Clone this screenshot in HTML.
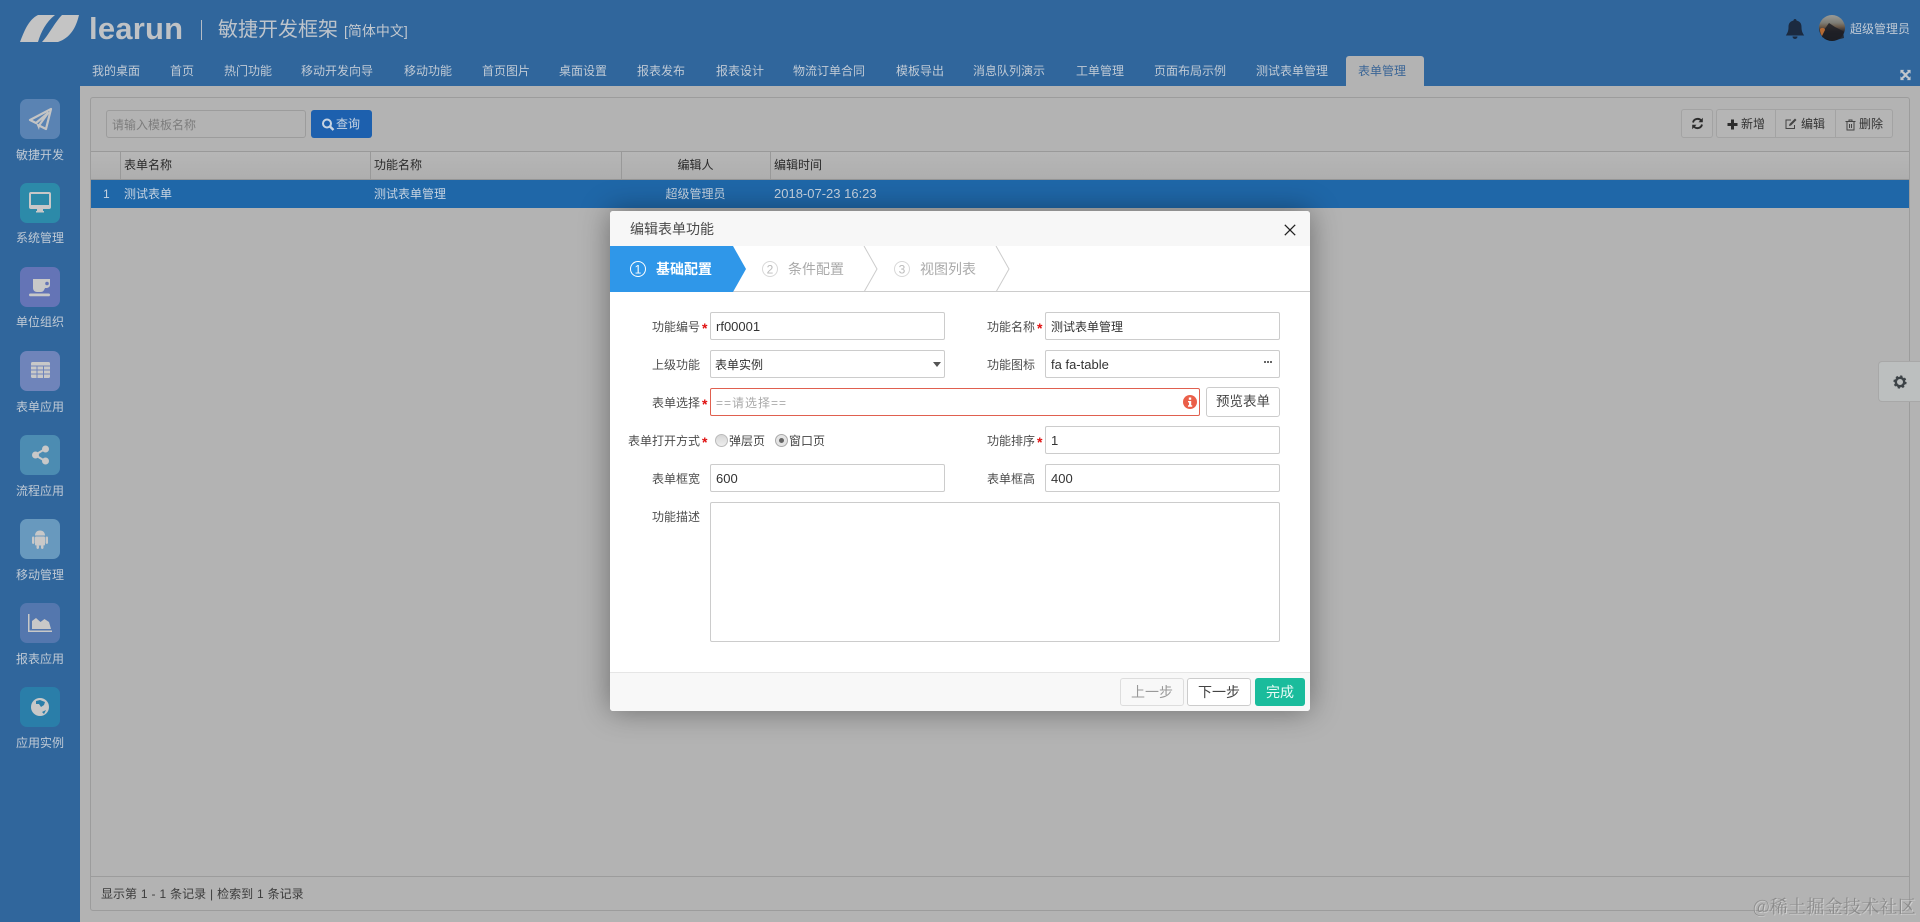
<!DOCTYPE html>
<html lang="zh"><head><meta charset="utf-8"><title>learun</title>
<style>
*{box-sizing:border-box}
html,body{margin:0;padding:0;width:1920px;height:922px;overflow:hidden;background:#b3b3b3}
body{position:relative;font:12px/20px "Liberation Sans","Noto Sans CJK SC",sans-serif;color:#333;filter:blur(.3px)}
div,span,svg{position:absolute}
.t{white-space:nowrap;height:20px;line-height:20px}
.c{text-align:center}
.tab{color:#c0cad5;top:61px}
.mi{left:20px;width:40px;height:40px;border-radius:7px}
.mi svg{left:0;top:0}
.ml{left:0;width:80px;text-align:center;color:#c0cad5;white-space:nowrap;height:20px;line-height:20px}
.th{top:155px;color:#2a2a2a}
.td{top:184px;color:#c6d3e0}
.inp{background:#fff;border:1px solid #ccc;border-radius:2px;height:28px}
.lb{color:#4d4d4d;text-align:right;white-space:nowrap;height:20px;line-height:20px}
.st{color:#e01010;font-size:14px;font-weight:bold}
.v{color:#333}
.l{font-size:13px}
.btn{border:1px solid #a3a3a3;background:#b5b5b5;height:29px}
</style></head><body>

<!-- top header -->
<div style="left:0;top:0;width:1920px;height:86px;background:#30669c"></div>
<div style="left:0;top:86px;width:80px;height:836px;background:#30669c"></div>

<svg style="left:0;top:0" width="90" height="60" viewBox="0 0 90 60">
<path fill="#c4c4c4" d="M20 42C24 32 28 20 38 15L55 15C46 22 41 32 38 42Z"/>
<path fill="#c4c4c4" d="M62 15L79 15C76 28 70 38 58 42L42 42C48 36 55 22 62 15Z"/>
</svg>
<div class="t" style="left:89px;top:9px;height:40px;font:bold 31px/40px 'Liberation Sans',sans-serif;color:#bfc2c5;letter-spacing:.2px">learun</div>
<div style="left:201px;top:20px;width:1px;height:20px;background:#b4bcc6"></div>
<div class="t" style="left:218px;top:20px;font-size:20px;color:#bec4cb;line-height:20px;height:24px">敏捷开发框架</div>
<div class="t" style="left:344px;top:21px;font-size:14px;color:#c2c8cf">[简体中文]</div>

<!-- tabs -->
<div class="t tab" style="left:92px">我的桌面</div>
<div class="t tab" style="left:170px">首页</div>
<div class="t tab" style="left:224px">热门功能</div>
<div class="t tab" style="left:301px">移动开发向导</div>
<div class="t tab" style="left:404px">移动功能</div>
<div class="t tab" style="left:482px">首页图片</div>
<div class="t tab" style="left:559px">桌面设置</div>
<div class="t tab" style="left:637px">报表发布</div>
<div class="t tab" style="left:716px">报表设计</div>
<div class="t tab" style="left:793px">物流订单合同</div>
<div class="t tab" style="left:896px">模板导出</div>
<div class="t tab" style="left:973px">消息队列演示</div>
<div class="t tab" style="left:1076px">工单管理</div>
<div class="t tab" style="left:1154px">页面布局示例</div>
<div class="t tab" style="left:1256px">测试表单管理</div>
<div style="left:1346px;top:56px;width:78px;height:30px;background:#b3b3b3;border-radius:3px 3px 0 0"></div>
<div class="t" style="left:1358px;top:61px;color:#3a6596">表单管理</div>

<!-- top right -->
<svg style="left:1785px;top:18px" width="20" height="22" viewBox="0 0 20 22">
<path fill="#1b2a40" d="M10 1C9 1 8.500 1.700 8.500 2.500C4.500 3.500 3.500 6 3.500 9C3.500 13 2.500 15 .8 17.500L19.200 17.500C17.500 15 16.500 13 16.500 9C16.500 6 15.500 3.500 11.500 2.500C11.500 1.700 11 1 10 1Z"/>
<path fill="#1b2a40" d="M7.500 18.500A2.500 2.500 0 0 0 12.500 18.500Z"/>
</svg>
<svg style="left:1819px;top:15px" width="26" height="26" viewBox="0 0 26 26">
<defs><linearGradient id="av" x1="0" y1="0" x2="0" y2="1"><stop offset="0" stop-color="#9b9b96"/><stop offset=".3" stop-color="#7d7d76"/><stop offset=".45" stop-color="#6a5a4a"/><stop offset=".65" stop-color="#22222a"/><stop offset="1" stop-color="#121419"/></linearGradient></defs>
<circle cx="13" cy="13" r="13" fill="url(#av)"/>
<path fill="#1f2026" d="M5 15L10 8L16 12L24 16L25 23L13 26L3 22Z" opacity=".85"/>
<path fill="#b46a33" d="M1 14C3 12 6 13 6 15L3 21C1.500 19 1 17 1 14Z"/>
</svg>
<div class="t" style="left:1850px;top:19px;color:#c0cad5">超级管理员</div>
<svg style="left:1900px;top:69px" width="11" height="12" viewBox="0 0 13 13">
<path fill="#c0c6cc" d="M0.500 0.500H5L3.600 1.900L6.500 4.500L9.400 1.900L8 0.500H12.500V5L11.100 3.600L8.300 6.500L11.100 9.400L12.500 8V12.500H8L9.400 11.100L6.500 8.500L3.600 11.100L5 12.500H0.500V8L1.900 9.400L4.700 6.500L1.900 3.600L0.500 5Z"/>
</svg>

<!-- sidebar -->
<div class="mi" style="top:99px;background:#5a83b3"><svg width="40" height="40" viewBox="0 0 40 40"><path fill="none" stroke="#c4c4c4" stroke-width="2.200" stroke-linejoin="round" d="M31 10L10 21L16 24L28 14L19 26.500L26 30Z"/><path fill="#c4c4c4" d="M16 24L19 31L20 26Z"/></svg></div>
<div class="ml" style="top:145px">敏捷开发</div>
<div class="mi" style="top:183px;background:#2c8aa9"><svg width="40" height="40" viewBox="0 0 40 40"><rect x="9" y="9" width="22" height="17" rx="2" fill="#c8c8c8"/><rect x="11" y="11" width="18" height="11" fill="#2c8aa9"/><rect x="17" y="26" width="6" height="2" fill="#c8c8c8"/><rect x="16" y="28" width="8" height="1.500" fill="#c8c8c8"/></svg></div>
<div class="ml" style="top:228px">系统管理</div>
<div class="mi" style="top:267px;background:#6474b6"><svg width="40" height="40" viewBox="0 0 40 40"><path fill="#c8c8c8" d="M13 12H30V18C30 20 28 21 26 21H25C24 23.500 23 25 21 25H17C15 25 13 23.500 13 21Z"/><circle cx="27" cy="16.500" r="1.800" fill="#6474b6"/><rect x="9" y="26.500" width="21" height="2.800" rx="1.400" fill="#c8c8c8"/></svg></div>
<div class="ml" style="top:312px">单位组织</div>
<div class="mi" style="top:351px;background:#6f84ba"><svg width="40" height="40" viewBox="0 0 40 40"><rect x="11" y="11" width="19" height="16" rx="1.500" fill="#c8c8c8"/><path stroke="#6f84ba" stroke-width="1" d="M11 15H30M11 19H30M11 23H30M17 15V27M23.500 15V27"/></svg></div>
<div class="ml" style="top:397px">表单应用</div>
<div class="mi" style="top:435px;background:#4c8cb2"><svg width="40" height="40" viewBox="0 0 40 40"><path stroke="#c8c8c8" stroke-width="2" fill="none" d="M25 14L15 20L25 26"/><circle cx="25.500" cy="14" r="3.500" fill="#c8c8c8"/><circle cx="15.500" cy="20" r="3.500" fill="#c8c8c8"/><circle cx="25.500" cy="26" r="3.500" fill="#c8c8c8"/></svg></div>
<div class="ml" style="top:481px">流程应用</div>
<div class="mi" style="top:519px;background:#6899be"><svg width="40" height="40" viewBox="0 0 40 40"><path fill="#c8c8c8" d="M15 16.500C15 13.500 17 11.500 20 11.500C23 11.500 25 13.500 25 16.500Z"/><rect x="15" y="17.500" width="10" height="9" rx="1" fill="#c8c8c8"/><rect x="12" y="17.500" width="2.400" height="7.500" rx="1.200" fill="#c8c8c8"/><rect x="25.600" y="17.500" width="2.400" height="7.500" rx="1.200" fill="#c8c8c8"/><rect x="16.500" y="26" width="2.500" height="4" rx="1.200" fill="#c8c8c8"/><rect x="21" y="26" width="2.500" height="4" rx="1.200" fill="#c8c8c8"/></svg></div>
<div class="ml" style="top:565px">移动管理</div>
<div class="mi" style="top:603px;background:#5477ae"><svg width="40" height="40" viewBox="0 0 40 40"><path fill="#c8c8c8" d="M8 11H9.500V27.500H32V29H8Z"/><path fill="#c8c8c8" d="M12 26V18L16 15L20.500 19L24.500 16L29 19L31 26Z"/></svg></div>
<div class="ml" style="top:649px">报表应用</div>
<div class="mi" style="top:687px;background:#2a7ea9"><svg width="40" height="40" viewBox="0 0 40 40"><circle cx="20" cy="20" r="9" fill="#c8c8c8"/><path fill="#2a7ea9" d="M16 14L20 13L25 15L24 18L21 20L19 17L16 17ZM22 25L26 23L24 27Z"/></svg></div>
<div class="ml" style="top:733px">应用实例</div>

<!-- main panel -->
<div style="left:90px;top:97px;width:1820px;height:814px;border:1px solid #9c9c9c;border-radius:3px;background:#b3b3b3"></div>
<div class="inp" style="left:106px;top:110px;width:200px;background:#b3b3b3;border-color:#9c9c9c;border-radius:3px"></div>
<div class="t" style="left:112px;top:115px;color:#7d7d7d">请输入模板名称</div>
<div style="left:311px;top:110px;width:61px;height:28px;background:#1d60ae;border-radius:3px"></div>
<svg style="left:321px;top:117px" width="14" height="15" viewBox="0 0 14 15"><circle cx="6" cy="6.500" r="4" fill="none" stroke="#c8d4e2" stroke-width="2"/><path stroke="#c8d4e2" stroke-width="2.400" d="M9 9.500L12.500 13"/></svg>
<div class="t" style="left:336px;top:114px;color:#c8d4e2">查询</div>

<!-- toolbar -->
<div class="btn" style="left:1681px;top:109px;width:32px;border-radius:3px"></div>
<svg style="left:1691px;top:117px" width="13" height="13" viewBox="0 0 13 13"><path fill="none" stroke="#2c2c2c" stroke-width="1.900" d="M2 5.500A4.700 4.700 0 0 1 10.500 4M11 7.500A4.700 4.700 0 0 1 2.500 9"/><path fill="#2c2c2c" d="M11.800 0.800V5.200H7.500ZM1.200 12.200V7.800H5.500Z"/></svg>
<div class="btn" style="left:1716px;top:109px;width:60px;border-radius:3px 0 0 3px"></div>
<div class="btn" style="left:1775px;top:109px;width:61px"></div>
<div class="btn" style="left:1835px;top:109px;width:58px;border-radius:0 3px 3px 0"></div>
<svg style="left:1727px;top:119px" width="11" height="11" viewBox="0 0 11 11"><path fill="#2c2c2c" d="M4 .5H7V4H10.500V7H7V10.500H4V7H.5V4H4Z"/></svg>
<div class="t" style="left:1741px;top:114px;color:#333">新增</div>
<svg style="left:1785px;top:118px" width="12" height="12" viewBox="0 0 12 12"><path fill="none" stroke="#444" stroke-width="1" d="M9.500 7V10.500H1V2H6"/><path fill="#444" d="M10 .5L11.500 2L6 7.500L4 8L4.500 6Z"/></svg>
<div class="t" style="left:1801px;top:114px;color:#333">编辑</div>
<svg style="left:1845px;top:119px" width="11" height="12" viewBox="0 0 11 12"><path fill="none" stroke="#444" stroke-width="1" d="M2 3V11H9V3M.5 2.500H10.500M4 2.500V1H7V2.500M4.500 5V9M6.500 5V9"/></svg>
<div class="t" style="left:1859px;top:114px;color:#333">删除</div>

<!-- table -->
<div style="left:91px;top:151px;width:1818px;height:29px;background:linear-gradient(#b6b6b6,#aeaeae);border-top:1px solid #999;border-bottom:1px solid #959595"></div>
<div style="left:120px;top:152px;width:1px;height:27px;background:#999"></div>
<div style="left:370px;top:152px;width:1px;height:27px;background:#999"></div>
<div style="left:621px;top:152px;width:1px;height:27px;background:#999"></div>
<div style="left:770px;top:152px;width:1px;height:27px;background:#999"></div>
<div class="t th" style="left:124px">表单名称</div>
<div class="t th" style="left:374px">功能名称</div>
<div class="t th c" style="left:621px;width:149px">编辑人</div>
<div class="t th" style="left:774px">编辑时间</div>
<div style="left:91px;top:180px;width:1818px;height:28px;background:#1f67a8"></div>
<div class="t td" style="left:103px">1</div>
<div class="t td" style="left:124px">测试表单</div>
<div class="t td" style="left:374px">测试表单管理</div>
<div class="t td c" style="left:621px;width:149px">超级管理员</div>
<div class="t td l" style="left:774px">2018-07-23 16:23</div>

<!-- footer -->
<div style="left:91px;top:876px;width:1818px;height:1px;background:#9c9c9c"></div>
<div class="t" style="left:101px;top:884px;color:#3c3c3c;word-spacing:.6px">显示第 1 - 1 条记录 | 检索到 1 条记录</div>

<!-- settings tab -->
<div style="left:1878px;top:361px;width:42px;height:41px;background:#bcbfbf;border:1px solid #a8a8a8;border-right:0;border-radius:4px 0 0 4px"></div>
<svg style="left:1893px;top:375px" width="14" height="14" viewBox="0 0 14 14"><circle cx="7" cy="7" r="4.200" fill="none" stroke="#3d4347" stroke-width="2.400"/><circle cx="7" cy="7" r="5.700" fill="none" stroke="#3d4347" stroke-width="1.800" stroke-dasharray="2.200 2.280"/></svg>

<!-- modal -->
<div style="left:610px;top:211px;width:700px;height:500px;background:#fff;border-radius:3px;box-shadow:0 0 30px rgba(0,0,0,.4);overflow:hidden">
  <div style="left:0;top:0;width:700px;height:35px;background:#f7f7f7"></div>
  <div style="left:0;top:80px;width:700px;height:1px;background:#ccc"></div>
  <svg style="left:0;top:35px" width="420" height="46" viewBox="0 0 420 46">
    <path fill="#2f97e9" d="M0 0H123L136 23L123 46H0Z"/>
    <path fill="none" stroke="#ccc" d="M254 0L267 23L254 46M386 0L399 23L386 46"/>
  </svg>
  <div style="left:0;top:461px;width:700px;height:39px;background:#f8f8f8;border-top:1px solid #e6e6e6"></div>
</div>
<div class="t" style="left:630px;top:219px;font-size:14px;color:#4a4a4a">编辑表单功能</div>
<svg style="left:1284px;top:224px" width="12" height="12" viewBox="0 0 12 12"><path stroke="#222" stroke-width="1.300" d="M.8 .8L11.200 11.200M11.200 .8L.8 11.200"/></svg>

<svg style="left:629px;top:260px" width="18" height="18" viewBox="0 0 18 18"><circle cx="9" cy="9" r="7.500" fill="none" stroke="#fff"/><text x="9" y="13.500" font-size="12" font-family="Liberation Sans" fill="#fff" text-anchor="middle">1</text></svg>
<div class="t" style="left:656px;top:259px;font-size:14px;font-weight:bold;color:#fff">基础配置</div>
<svg style="left:761px;top:260px" width="18" height="18" viewBox="0 0 18 18"><circle cx="9" cy="9" r="7.500" fill="none" stroke="#d8d8d8"/><text x="9" y="13.500" font-size="12" font-family="Liberation Sans" fill="#bbb" text-anchor="middle">2</text></svg>
<div class="t" style="left:788px;top:259px;font-size:14px;color:#aaa">条件配置</div>
<svg style="left:893px;top:260px" width="18" height="18" viewBox="0 0 18 18"><circle cx="9" cy="9" r="7.500" fill="none" stroke="#d8d8d8"/><text x="9" y="13.500" font-size="12" font-family="Liberation Sans" fill="#bbb" text-anchor="middle">3</text></svg>
<div class="t" style="left:920px;top:259px;font-size:14px;color:#aaa">视图列表</div>

<!-- form -->
<div class="lb" style="left:600px;top:317px;width:100px">功能编号</div><div class="t st" style="left:702px;top:318px">*</div>
<div class="inp" style="left:710px;top:312px;width:235px"></div><div class="t v l" style="left:716px;top:317px">rf00001</div>
<div class="lb" style="left:935px;top:317px;width:100px">功能名称</div><div class="t st" style="left:1037px;top:318px">*</div>
<div class="inp" style="left:1045px;top:312px;width:235px"></div><div class="t v" style="left:1051px;top:317px">测试表单管理</div>

<div class="lb" style="left:600px;top:355px;width:100px">上级功能</div>
<div class="inp" style="left:710px;top:350px;width:235px"></div><div class="t v" style="left:715px;top:355px">表单实例</div>
<svg style="left:933px;top:362px" width="8" height="5" viewBox="0 0 8 5"><path fill="#555" d="M0 0H8L4 5Z"/></svg>
<div class="lb" style="left:935px;top:355px;width:100px">功能图标</div>
<div class="inp" style="left:1045px;top:350px;width:235px"></div><div class="t v l" style="left:1051px;top:355px">fa fa-table</div>
<div style="left:1264px;top:361px;width:2px;height:2px;background:#666;box-shadow:3px 0 #666,6px 0 #666"></div>

<div class="lb" style="left:600px;top:393px;width:100px">表单选择</div><div class="t st" style="left:702px;top:394px">*</div>
<div class="inp" style="left:710px;top:388px;width:490px;border-color:#e0604f"></div><div class="t" style="left:716px;top:393px;color:#aaa;letter-spacing:1px">==请选择==</div>
<svg style="left:1183px;top:395px" width="14" height="14" viewBox="0 0 14 14"><circle cx="7" cy="7" r="7" fill="#ea5f49"/><rect x="5.800" y="2.500" width="2.400" height="2.300" fill="#fff"/><path fill="#fff" d="M5 6H8.200V10.300H9.200V11.700H5V10.300H6V7.400H5Z"/></svg>
<div style="left:1206px;top:387px;width:74px;height:30px;border:1px solid #ccc;border-radius:3px;background:#fff"></div>
<div class="t c" style="left:1206px;top:392px;width:74px;color:#444;font-size:13.500px">预览表单</div>

<div class="lb" style="left:600px;top:431px;width:100px">表单打开方式</div><div class="t st" style="left:702px;top:432px">*</div>
<div style="left:715px;top:434px;width:13px;height:13px;border-radius:50%;background:linear-gradient(#d6d6d6,#eee);border:1px solid #bbb"></div>
<div class="t" style="left:729px;top:431px;color:#444">弹层页</div>
<div style="left:775px;top:434px;width:13px;height:13px;border-radius:50%;background:#e4e4e4;border:1px solid #aaa"></div>
<div style="left:779px;top:438px;width:5px;height:5px;border-radius:50%;background:#666"></div>
<div class="t" style="left:789px;top:431px;color:#444">窗口页</div>
<div class="lb" style="left:935px;top:431px;width:100px">功能排序</div><div class="t st" style="left:1037px;top:432px">*</div>
<div class="inp" style="left:1045px;top:426px;width:235px"></div><div class="t v l" style="left:1051px;top:431px">1</div>

<div class="lb" style="left:600px;top:469px;width:100px">表单框宽</div>
<div class="inp" style="left:710px;top:464px;width:235px"></div><div class="t v l" style="left:716px;top:469px">600</div>
<div class="lb" style="left:935px;top:469px;width:100px">表单框高</div>
<div class="inp" style="left:1045px;top:464px;width:235px"></div><div class="t v l" style="left:1051px;top:469px">400</div>

<div class="lb" style="left:600px;top:507px;width:100px">功能描述</div>
<div class="inp" style="left:710px;top:502px;width:570px;height:140px"></div>

<!-- modal footer -->
<div style="left:1120px;top:678px;width:64px;height:28px;border:1px solid #ddd;border-radius:3px;background:#f8f8f8"></div>
<div class="t c" style="left:1120px;top:682px;width:64px;color:#999;font-size:14px">上一步</div>
<div style="left:1187px;top:678px;width:64px;height:28px;border:1px solid #ccc;border-radius:3px;background:#fff"></div>
<div class="t c" style="left:1187px;top:682px;width:64px;color:#444;font-size:14px">下一步</div>
<div style="left:1255px;top:678px;width:50px;height:28px;border-radius:3px;background:#1abc9c"></div>
<div class="t c" style="left:1255px;top:682px;width:50px;color:#e9fbf6;font-size:14px">完成</div>

<!-- watermark -->
<div class="t" style="left:1753px;top:896px;font:18px/20px 'Noto Serif CJK SC','Liberation Serif',serif;color:#8b8b8b;text-shadow:1px 1px 0 rgba(225,225,225,.6);letter-spacing:.3px">@稀土掘金技术社区</div>
</body></html>
